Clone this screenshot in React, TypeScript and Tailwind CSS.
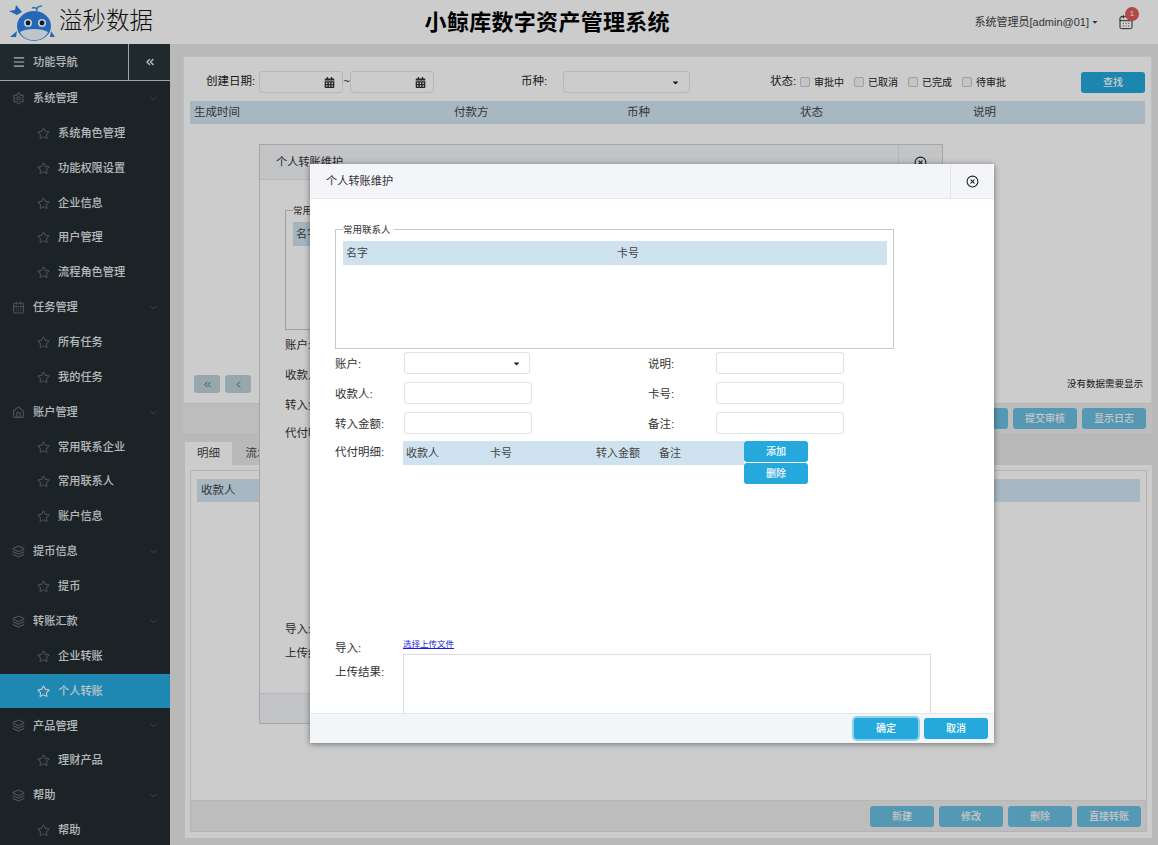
import { ReactNode } from 'react';
import { Star, ChevronDown, Settings, CalendarDays, Home, Layers, Menu, ChevronsLeft, ChevronLeft, CircleX } from 'lucide-react';
import { FaCalendarAlt, FaCaretDown } from 'react-icons/fa';

type NavItem = { label: string; icon?: 'gear' | 'cal' | 'home' | 'layers'; active?: boolean };

const nav: NavItem[] = [
  { label: '系统管理', icon: 'gear' },
  { label: '系统角色管理' },
  { label: '功能权限设置' },
  { label: '企业信息' },
  { label: '用户管理' },
  { label: '流程角色管理' },
  { label: '任务管理', icon: 'cal' },
  { label: '所有任务' },
  { label: '我的任务' },
  { label: '账户管理', icon: 'home' },
  { label: '常用联系企业' },
  { label: '常用联系人' },
  { label: '账户信息' },
  { label: '提币信息', icon: 'layers' },
  { label: '提币' },
  { label: '转账汇款', icon: 'layers' },
  { label: '企业转账' },
  { label: '个人转账', active: true },
  { label: '产品管理', icon: 'layers' },
  { label: '理财产品' },
  { label: '帮助', icon: 'layers' },
  { label: '帮助' },
];

function GroupIcon({ name }: { name: NavItem['icon'] }) {
  const cls = 'w-[13px] h-[13px] text-[#5d6b72]';
  if (name === 'gear') return <Settings className={cls} />;
  if (name === 'cal') return <CalendarDays className={cls} />;
  if (name === 'home') return <Home className={cls} />;
  return <Layers className={cls} />;
}

function Whale() {
  return (
    <svg width="48" height="40" viewBox="0 0 48 40">
      <path d="M10 13 L2 9 L8 8 L9 3 L15 10 Z" fill="#2f80e0" />
      <path d="M30 9 C29 6 31 4 35 4 M30 9 C30 6 28 5 25 6" stroke="#3f92e6" strokeWidth="1.6" fill="none" />
      <ellipse cx="27" cy="24" rx="17" ry="15" fill="#2f82e6" />
      <path d="M13 30 C17 41 37 41 41 30 C35 26 19 26 13 30 Z" fill="#eef5fc" />
      <circle cx="21" cy="21" r="4" fill="#fff" />
      <circle cx="21" cy="21" r="2.4" fill="#10233d" />
      <circle cx="35" cy="21" r="4" fill="#fff" />
      <circle cx="35" cy="21" r="2.4" fill="#10233d" />
      <path d="M10 29 L3 35 L9 35 Z" fill="#2f80e0" />
      <path d="M44 29 L48 35 L43 35 Z" fill="#2f80e0" />
    </svg>
  );
}

function Sidebar() {
  return (
    <aside className="w-[170px] shrink-0 bg-[#222c31] text-[11.2px] font-medium text-[#e3e7e9] overflow-hidden">
      <div className="h-[37px] flex items-stretch bg-[#28343a] border-b border-[#c9ced1]">
        <div className="flex-1 flex items-center gap-[7px] pl-[12px]">
          <Menu className="w-[14px] h-[14px] text-[#e3e7e9]" />
          <span>功能导航</span>
        </div>
        <div className="w-[42px] border-l border-[#c9ced1] flex items-center justify-center">
          <ChevronsLeft className="w-[12px] h-[12px] text-[#e3e7e9]" strokeWidth={3} />
        </div>
      </div>
      {nav.map((item, i) => (
        <div
          key={i}
          className={`h-[34.86px] flex items-center ${item.active ? 'bg-[#26a9df] text-[#e6f4fb]' : ''} ${item.icon ? 'pl-[12px]' : 'pl-[37px]'}`}
        >
          {item.icon ? (
            <>
              <GroupIcon name={item.icon} />
              <span className="ml-[8px] flex-1">{item.label}</span>
              <ChevronDown className="w-[11px] h-[11px] text-[#4f5c63] mr-[11px]" />
            </>
          ) : (
            <>
              <Star className={`w-[13px] h-[13px] ${item.active ? 'text-white' : 'text-[#55636b]'}`} />
              <span className="ml-[8px]">{item.label}</span>
            </>
          )}
        </div>
      ))}
    </aside>
  );
}

function Btn({ children, focus, dim }: { children: ReactNode; focus?: boolean; dim?: boolean }) {
  return (
    <button className={`w-[64px] h-[21px] shrink-0 rounded-[3px] bg-[#25a8dc] text-white text-[10px] font-medium flex items-center justify-center ${focus ? 'ring-2 ring-[#8fd0ea]' : ''} ${dim ? 'opacity-65' : ''}`}>
      {children}
    </button>
  );
}

function Field({ wide, caret }: { wide?: boolean; caret?: boolean }) {
  return (
    <div className={`h-[22px] ${wide ? 'w-[128px]' : 'w-[126px]'} rounded-[3px] border border-[#dfe3e6] bg-white flex items-center justify-end pr-[8px]`}>
      {caret && <FaCaretDown className="w-[9px] h-[9px] text-[#222]" />}
    </div>
  );
}

function DateField() {
  return (
    <div className="h-[22px] w-[84px] rounded-[3px] border border-[#e3e6e8] bg-white flex items-center justify-end pr-[7px]">
      <FaCalendarAlt className="w-[11px] h-[11px] text-[#333]" />
    </div>
  );
}

function Check({ label }: { label: string }) {
  return (
    <label className="flex items-center gap-[4px] text-[#222]">
      <span className="w-[10px] h-[10px] rounded-[2px] border border-[#c8c8c8] bg-[#f6f6f6]" />
      {label}
    </label>
  );
}

function Toolbar() {
  return (
    <div className="h-[24px] flex items-center text-[11.5px] text-[#222] pl-[16px]">
      <span className="w-[53px]">创建日期:</span>
      <DateField />
      <span className="w-[7px] text-center">~</span>
      <DateField />
      <span className="ml-[87px] w-[42px]">币种:</span>
      <div className="h-[22px] w-[127px] rounded-[3px] border border-[#e3e6e8] bg-white flex items-center justify-end pr-[9px]">
        <FaCaretDown className="w-[9px] h-[9px] text-[#222]" />
      </div>
      <span className="ml-[80px] w-[30px]">状态:</span>
      <div className="flex items-center gap-[10px] text-[10px]">
        <Check label="审批中" />
        <Check label="已取消" />
        <Check label="已完成" />
        <Check label="待审批" />
      </div>
      <div className="ml-auto">
        <Btn>查找</Btn>
      </div>
    </div>
  );
}

function Label({ children }: { children: ReactNode }) {
  return <span className="pt-[4px]">{children}</span>;
}

function Dialog({ className, top }: { className: string; top?: boolean }) {
  return (
    <div className={`absolute w-[684px] flex flex-col bg-white overflow-hidden ${className}`}>
      <div className="h-[35px] shrink-0 bg-[#f3f5f8] border-b border-[#e4e7ea] flex items-center justify-between text-[11.2px] text-[#333] pl-[16px]">
        <span className="pt-[1px]">个人转账维护</span>
        <div className="w-[44px] h-full border-l border-[#e0e3e6] flex items-center justify-center pr-[1px]">
          <CircleX className="w-[13px] h-[13px] text-[#222]" />
        </div>
      </div>
      <div className="flex-1 min-h-0 overflow-hidden pl-[25px] text-[11.5px] text-[#333]">
        <fieldset className="mt-[25px] w-[559px] h-[125px] border border-[#c9c9c9] px-[7px] min-w-0">
          <legend className="text-[9.5px] leading-[11px] text-[#333] pr-[3px]">常用联系人</legend>
          <div className="mt-[6px] h-[24px] w-[544px] bg-[#cfe2ef] flex items-center text-[11px] text-[#444]">
            <span className="ml-[3px] w-[271px]">名字</span>
            <span>卡号</span>
          </div>
        </fieldset>
        <div className="mt-[3px] grid grid-cols-[69px_244px_68px_128px] gap-y-[8px] items-center">
          <Label>账户:</Label>
          <Field caret />
          <Label>说明:</Label>
          <Field wide />
          <Label>收款人:</Label>
          <Field wide />
          <Label>卡号:</Label>
          <Field wide />
          <Label>转入金额:</Label>
          <Field wide />
          <Label>备注:</Label>
          <Field wide />
        </div>
        <div className="mt-[7px] flex items-start h-[195px]">
          <span className="w-[68px] pt-[3px]">代付明细:</span>
          <div className="h-[24px] w-[341px] bg-[#cfe2ef] flex items-center text-[11px] text-[#444]">
            <span className="ml-[3px] pt-[1px] w-[84px]">收款人</span>
            <span className="pt-[1px] w-[106px]">卡号</span>
            <span className="pt-[1px] w-[63px]">转入金额</span>
            <span className="pt-[1px]">备注</span>
          </div>
          <div className="flex flex-col">
            <Btn>添加</Btn>
            <div className="h-[1px]" />
            <Btn>删除</Btn>
          </div>
        </div>
        <div className="flex items-start h-[18px]">
          <span className="w-[68px] pt-[4px]">导入:</span>
          <a className="pt-[2px] text-[8.5px] leading-[12px] text-[#1a1ae0] underline">选择上传文件</a>
        </div>
        <div className="flex items-start">
          <span className="w-[68px] pt-[10px]">上传结果:</span>
          <div className="w-[528px] h-[120px] border border-[#dcdcdc] bg-white" />
        </div>
      </div>
      <div className="h-[30px] shrink-0 bg-[#f3f6f9] border-t border-[#e4e7ea] flex items-center justify-end gap-[6px] pr-[6px]">
        <Btn focus={top}>确定</Btn>
        <Btn>取消</Btn>
      </div>
    </div>
  );
}

export default function App() {
  return (
    <div className="relative w-[1158px] h-[845px] overflow-hidden bg-white font-['Liberation_Sans','Noto_Sans_CJK_SC',sans-serif]">
      <header className="h-[44px] bg-white flex items-center">
        <div className="w-[170px] flex items-center pl-[7px] gap-[4px]">
          <Whale />
          <span className="text-[23.5px] font-light text-[#111] whitespace-nowrap">溢秒数据</span>
        </div>
        <div className="flex-1 flex justify-center pr-[50px]">
          <h1 className="text-[22px] tracking-[0.3px] font-bold text-black">小鲸库数字资产管理系统</h1>
        </div>
        <div className="flex items-center text-[11px] text-[#444] pr-[24px]">
          <span>系统管理员[admin@01]</span>
          <FaCaretDown className="w-[8px] h-[8px] ml-[2px]" />
          <div className="relative ml-[19px]">
            <CalendarDays className="w-[16px] h-[16px] text-[#333]" strokeWidth={1.5} />
            <span className="absolute -top-[7px] left-[7px] w-[14px] h-[14px] rounded-full bg-[#e05a5a] text-white text-[8px] flex items-center justify-center">1</span>
          </div>
        </div>
      </header>

      <div className="flex h-[801px]">
        <Sidebar />
        <main className="flex-1 bg-[#e8e8e8] pl-[13px] pr-[6px] pt-[12px] min-w-0">
          <section className="h-[377px] bg-white border border-[#eceff1] flex flex-col">
            <div className="flex-1 px-[6px] pt-[13px]">
              <Toolbar />
              <div className="mt-[7px] h-[23px] bg-[#d2e6f4] flex items-center text-[11.5px] text-[#444]">
                <span className="ml-[4px] w-[260px]">生成时间</span>
                <span className="w-[173px]">付款方</span>
                <span className="w-[173px]">币种</span>
                <span className="w-[173px]">状态</span>
                <span>说明</span>
              </div>
              <div className="mt-[251px] flex items-center pl-[4px] gap-[5px]">
                <button className="w-[26px] h-[18px] rounded-[3px] bg-[#bcd3da] flex items-center justify-center">
                  <ChevronsLeft className="w-[11px] h-[11px] text-[#555]" />
                </button>
                <button className="w-[26px] h-[18px] rounded-[3px] bg-[#bcd3da] flex items-center justify-center">
                  <ChevronLeft className="w-[11px] h-[11px] text-[#555]" />
                </button>
                <span className="ml-auto mr-[2px] text-[9.5px] text-[#222]">没有数据需要显示</span>
              </div>
            </div>
            <div className="h-[29px] bg-[#ededed] border-t border-[#e4e4e4] flex items-center justify-end gap-[5px] pr-[5px]">
              <Btn dim>提交</Btn>
              <Btn dim>提交审核</Btn>
              <Btn dim>显示日志</Btn>
            </div>
          </section>

          <div className="mt-[10px] ml-[2px] flex h-[22px] items-end text-[11.5px] text-[#444]">
            <div className="w-[47px] h-[23px] bg-white flex items-center justify-center">明细</div>
            <div className="w-[50px] h-[23px] flex items-center justify-center">流水</div>
          </div>
          <section className="ml-[2px] h-[373px] bg-white p-[5px] pb-[6px]">
            <div className="h-full border border-[#e2e2e2] flex flex-col">
              <div className="flex-1 px-[6px] pt-[8px]">
                <div className="h-[23px] bg-[#d2e6f4] flex items-center text-[11.5px] text-[#444] pl-[4px]">收款人</div>
              </div>
              <div className="h-[31px] bg-[#ededed] border-t border-[#e4e4e4] flex items-center justify-end gap-[5px] pr-[5px]">
                <Btn dim>新建</Btn>
                <Btn dim>修改</Btn>
                <Btn dim>删除</Btn>
                <Btn dim>直接转账</Btn>
              </div>
            </div>
          </section>
        </main>
      </div>

      <Dialog className="left-[259px] top-[144px] h-[580px] border border-[#d0d0d0]" />
      <div className="absolute inset-0 bg-black/20" />
      <Dialog top className="left-[310px] top-[164px] h-[579px] shadow-[0_1px_6px_rgba(0,0,0,0.45)]" />
    </div>
  );
}
